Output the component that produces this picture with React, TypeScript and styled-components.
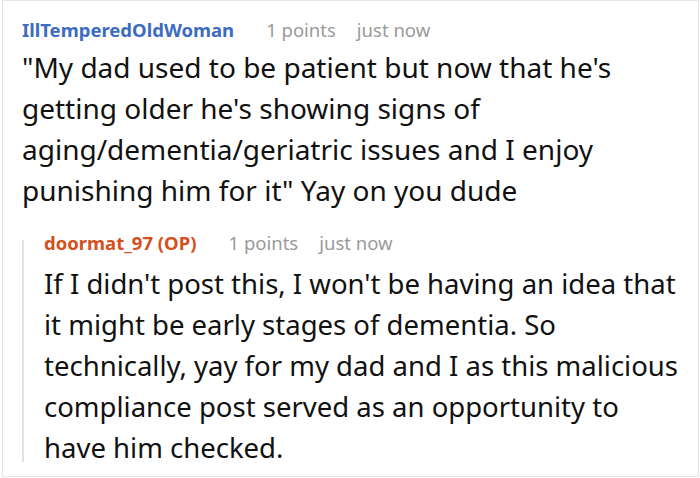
import React from "react";
import styled, { createGlobalStyle } from "styled-components";

const Global = createGlobalStyle`
  html, body { margin: 0; padding: 0; background: #fff; }
  body { font-family: "Noto Sans", "Open Sans", sans-serif; }
`;

const Frame = styled.div`
  box-sizing: border-box;
  width: 697px;
  height: 477px;
  margin-left: 2px;
  border: 1px solid #e6e6e6;
  padding: 14px 15px 0 19px;
  overflow: hidden;
`;

const Comment = styled.div`
  min-width: 0;
  flex: 1;
`;

const Header = styled.div`
  display: flex;
  align-items: baseline;
  gap: 21px;
  font-size: 18.5px;
  line-height: 30px;
  white-space: nowrap;
`;

const Author = styled.span<{ $op?: boolean }>`
  font-weight: 700;
  margin-right: 11px;
  color: ${(p) => (p.$op ? "#d4501c" : "#3b6cc0")};
`;

const Meta = styled.span`
  color: #9a9a9a;
`;

const Body = styled.p<{ $size: number; $gap: number }>`
  margin: ${(p) => p.$gap}px 0 0;
  font-size: ${(p) => p.$size}px;
  line-height: 41px;
  color: #111;
`;

const Replies = styled.div`
  display: flex;
  margin-top: 17px;
`;

const Rule = styled.div`
  flex: none;
  width: 2px;
  margin: 12px 20px 6px 0;
  background: #e2e2e2;
`;

const comments = {
  author: "IllTemperedOldWoman",
  body:
    "\"My dad used to be patient but now that he's getting older he's showing signs of aging/dementia/geriatric issues and I enjoy punishing him for it\" Yay on you dude",
  reply: {
    author: "doormat_97 (OP)",
    body:
      "If I didn't post this, I won't be having an idea that it might be early stages of dementia. So technically, yay for my dad and I as this malicious compliance post served as an opportunity to have him checked.",
  },
};

export default function App() {
  return (
    <>
      <Global />
      <Frame>
        <Comment>
          <Header>
            <Author>{comments.author}</Author>
            <Meta>1 points</Meta>
            <Meta>just now</Meta>
          </Header>
          <Body $size={28} $gap={2}>{comments.body}</Body>
        </Comment>
        <Replies>
          <Rule />
          <Comment>
            <Header>
              <Author $op>{comments.reply.author}</Author>
              <Meta>1 points</Meta>
              <Meta>just now</Meta>
            </Header>
            <Body $size={27.5} $gap={5}>{comments.reply.body}</Body>
          </Comment>
        </Replies>
      </Frame>
    </>
  );
}
